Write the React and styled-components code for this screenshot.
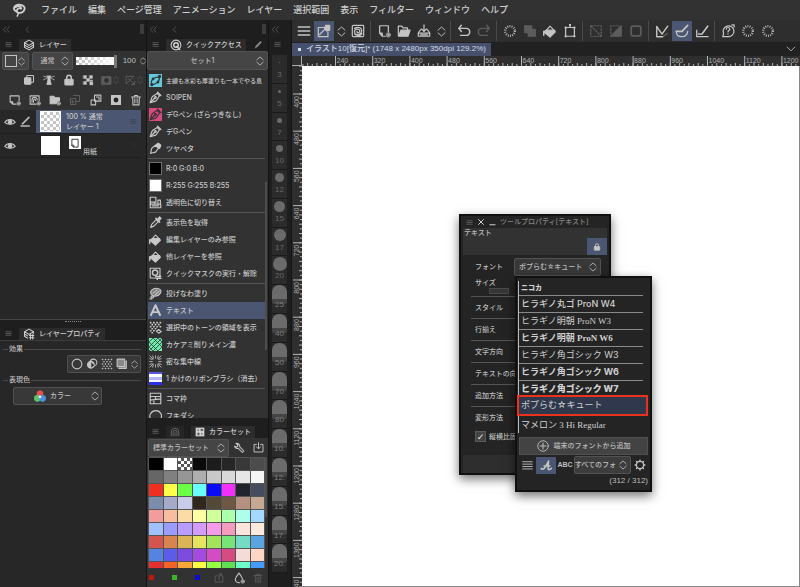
import React from "react"
import styled, { createGlobalStyle, css } from "styled-components"

const colors = {
  dark: "#1e1e1e",
  base: "#272727",
  panel: "#323232",
  control: "#454545",
  line: "#555555",
  text: "#bdbdbd",
  dim: "#5c5c5c",
  blue: "#4b5672",
  red: "#e8321c",
}

const sans = `Inter, "Noto Sans CJK JP", sans-serif`
const narrow = `"Liberation Sans", "Noto Sans CJK JP", sans-serif`
const serif = `"Liberation Serif", "Noto Sans CJK JP", serif`

const checker = css`
  background: repeating-conic-gradient(#c4c4c4 0 25%, #fff 0 50%) 0 0 / 6px 6px;
`

const GlobalStyle = createGlobalStyle`
  * {
    box-sizing: border-box;
  }
  body {
    margin: 0;
    background: ${colors.dark};
  }
  body, button, input, select {
    font-family: ${sans};
    font-size: 7px;
    font-weight: 500;
    line-height: 10px;
    color: ${colors.text};
  }
  button {
    padding: 0;
    border: 0;
    background: none;
  }
  ul {
    margin: 0;
    padding: 0;
    list-style: none;
  }
`

/* ---------- icons ---------- */

const Svg = styled.svg`
  display: block;
  flex: none;
  width: ${p => p.$size || 14}px;
  height: ${p => p.$size || 14}px;
  fill: none;
  stroke: currentColor;
  stroke-width: 1.4;
  stroke-linecap: round;
  stroke-linejoin: round;
`

const plusDot = (
  <>
    <circle cx="13" cy="12.500" r="2.500" fill="#777" stroke="#aaa" strokeWidth=".8" />
    <path d="M11.800 12.500h2.400M13 11.300v2.400" strokeWidth=".7" />
  </>
)

const drawings = {
  menu: <path d="M1.500 3.500h13M1.500 8h13M1.500 12.500h13" strokeWidth="1.800" />,
  grip: <path d="M2 4h12M2 8h12M2 12h12" strokeWidth="1.200" />,
  collapse: <path d="M7 3L2.500 8 7 13M13 3L8.500 8l4.500 5" />,
  back: <path d="M10 3L5.500 8l4.500 5" />,
  updown: <path d="M3 6l5-4.500L13 6M3 10l5 4.500L13 10" />,
  down: <path d="M2 5l6 6 6-6" />,
  layers: (
    <>
      <path d="M8 1.500L14 5 8 8.500 2 5z" />
      <path d="M2 5v6l6 3.500L14 11V5M2 8l6 3.500L14 8" />
    </>
  ),
  layersGrid: (
    <>
      <path d="M8 1.500L14 5 8 8.500 2 5zM2 5v6l4 2.500M2 8l4 2.500M14 5v2" />
      <path d="M8.500 10h6M8.500 13h6M10 8.500v6M13 8.500v6" />
    </>
  ),
  quick: (
    <>
      <circle cx="8" cy="8" r="6.500" />
      <circle cx="8" cy="8" r="3" strokeWidth="2" />
      <path d="M9 10l4 4" strokeWidth="2" />
    </>
  ),
  pencil: <path d="M2.500 14l2-5L12 1.500l2 2L7 11z" fill="currentColor" stroke="none" />,
  clip: (
    <>
      <rect x="5" y="2" width="9" height="9" rx="1" />
      <rect x="2" y="5" width="8.500" height="8.500" rx="1" fill="currentColor" />
    </>
  ),
  lighthouse: (
    <path d="M5.500 5h5M5.500 2.500h5L9.500 5v3l1.500 6H5l1.500-6V5zM1 3l3.500 1M1 7.500L4.500 6M15 3l-3.500 1M15 7.500L11.500 6" fill="currentColor" strokeWidth="1" />
  ),
  lock: (
    <>
      <rect x="2.500" y="7" width="11" height="7.500" rx="1" fill="currentColor" />
      <path d="M5 7V4.500a3 3 0 016 0V7" strokeWidth="2" />
    </>
  ),
  lockChecker: (
    <path d="M2 2h4v4H2zM6 6h4v4H6zM10 2h4v4h-4zM2 10h4v4H2zM10.500 10.500h4v4h-4zM11 10V8h3v2" fill="currentColor" strokeWidth=".5" />
  ),
  mask: (
    <>
      <rect x="1.500" y="2.500" width="13" height="11" fill="currentColor" />
      <circle cx="8" cy="8" r="3.500" fill="#323232" stroke="none" />
    </>
  ),
  rulerOff: <path d="M2 2h11L2 13zM5 5l9 9M9 14h5V9" />,
  newLayer: (
    <>
      <path d="M9.500 13.500H5l-3.500-3V2.500h12v6.500M1.500 10.500H5v3" />
      {plusDot}
    </>
  ),
  newVector: (
    <>
      <path d="M9.500 13.500h-8v-11h12v6.500" />
      <path d="M4 11V8a3.500 3.500 0 017 0M6 11V8.500a1.500 1.500 0 013 0" />
      {plusDot}
    </>
  ),
  folder: (
    <>
      <path d="M1.500 13V3h5l1.500 2h6v3.500L10 13z" fill="currentColor" />
      {plusDot}
    </>
  ),
  transfer: <path d="M6 2h8v8H9M2 6h7v8H2zM5 8v4M3.500 10.500L5 12l1.500-1.500" />,
  merge: (
    <>
      <rect x="6" y="1.500" width="8.500" height="8" />
      <path d="M1.500 8h6v6.500h-6zM8.500 4h3.500v3.500" />
    </>
  ),
  layerMask: (
    <>
      <rect x="2" y="2" width="12" height="12" fill="currentColor" />
      <circle cx="8" cy="8" r="3.200" fill="#222" stroke="none" />
    </>
  ),
  trash: <path d="M2 4h12M6 4V2h4v2M3.500 4l.5 10.500h8L12.500 4M6.500 6.500v5.500M9.500 6.500v5.500" />,
  eye: (
    <>
      <path d="M1 8.500C4 3.500 12 3.500 15 8.500 12 12 4 12 1 8.500z" />
      <circle cx="8" cy="8" r="2.500" fill="currentColor" />
    </>
  ),
  draw: <path d="M1.500 14.500h12M3.500 11.500L13 2" strokeWidth="2.200" />,
  nib: (
    <>
      <path d="M1.500 14.500L3.500 8C5 5.500 8 5 10 3l3 3c-2 2-2.500 5-5 6.500z" />
      <path d="M2 14l5-5M10.500 1.500l4 4" strokeWidth="1.700" />
      <circle cx="8" cy="8" r="1" />
    </>
  ),
  brush: (
    <>
      <path d="M2 14c1-2 0-5 2-7l4-3 3.500 3.500L8.500 12C7 13.500 4 13 2 14z" />
      <path d="M8.500 3.500l3-2 3 2.500-1.500 4z" fill="currentColor" />
    </>
  ),
  curve: (
    <>
      <path d="M3.500 13C1 8 6 3.500 12.500 3.500 14 8 9 13 3.500 13z" />
      <circle cx="13" cy="3" r="1.300" fill="currentColor" />
      <circle cx="3.500" cy="13" r="1.300" fill="currentColor" />
      <circle cx="5" cy="6" r="1" fill="currentColor" />
      <circle cx="11" cy="10" r="1" fill="currentColor" />
    </>
  ),
  stamp: (
    <>
      <path d="M1.500 1.500h7v6h-7zM1.500 10h13v4.500h-13zM7 10V7.500M11 10V5h3v5" />
      <path d="M1.500 7.500v2.500M4 12.200h8" />
    </>
  ),
  dropper: (
    <>
      <path d="M2 14l1.500-4L9 4.500 11.500 7 6 12.500z" />
      <path d="M8.500 3l4.500 4.500M10 5l3-3.500 1.500 1.500L11.500 6z" strokeWidth="2" />
    </>
  ),
  bucket: (
    <>
      <path d="M3.500 7.500L8 2.500l5 5" />
      <path d="M1 9l3-2h9l1 2-6 6z M1 8c-1 2-1 4 0 5z" fill="currentColor" />
    </>
  ),
  quickMask: (
    <>
      <rect x="1.500" y="1.500" width="12" height="12" />
      <circle cx="7.500" cy="7" r="3.200" strokeWidth="1.800" />
      <path d="M8 11.500h6.500L13 10M15 14H9l1.500 1.500" />
    </>
  ),
  lasso: (
    <>
      <path d="M3 9C0 5 5 1.500 9 1.500s7 3 5 6-6 4-9 3.500z" fill="#777" />
      <path d="M5 7.500l5-4M7.500 9.500l5-4.500M5 11c-2-.5-3.500 1-2 2.500S2 15 1 14.500M5 11c2 1 0 3-2 2.500" />
    </>
  ),
  text: <path d="M2 14.500L8 1.500l6 13M4.500 10h7" strokeWidth="2.400" strokeLinecap="butt" />,
  tone: (
    <>
      <path
        d="M2 2h0M6 2h0M10 2h0M14 2h0M4 4.500h0M8 4.500h0M12 4.500h0M2 7h0M6 7h0M10 7h0M14 7h0M4 9.500h0M8 9.500h0M2 12h0M6 12h0M4 14.500h0"
        strokeWidth="2"
        strokeLinecap="square"
      />
      <path d="M9 12.500l3-2 3 2.500-3 2z" />
    </>
  ),
  dots: (
    <path
      d="M2 2h0M6 2h0M10 2h0M14 2h0M4 5h0M8 5h0M12 5h0M2 8h0M6 8h0M10 8h0M14 8h0M4 11h0M8 11h0M12 11h0M2 14h0M6 14h0M10 14h0M14 14h0"
      strokeWidth="2.200"
    />
  ),
  net: <path d="M0 5l5-5M0 11L11 0M0 16L16 0M5 16L16 5M11 16l5-5M0 11l5 5M0 5l11 11M5 0l11 11M11 0l5 5" strokeWidth="1" />,
  burst: (
    <path d="M1 1l4 4M15 1l-4 4M1 15l4-4M15 15l-4-4M8 1v3M8 12v3M1 8h3M12 8h3M4.500 1l1 3M11.500 1l-1 3M4.500 15l1-3M11.500 15l-1-3M1 4.500l3 1M15 4.500l-3 1M1 11.500l3-1M15 11.500l-3-1" strokeWidth="1" strokeDasharray="2 .6" />
  ),
  frame: <path d="M1.500 1.500h13v13h-13zM1.500 5.500h13M1.500 10l13-1.500M8 5.500v4M6 9.500v5" />,
  balloon: <path d="M3.500 14c-6-6 0-12 5-12s10 6 4.500 12z" />,
  palette: <path d="M2 14V8a6 6 0 0112 0v6M5 14V8.500a3 3 0 016 0V14M8 9v5" />,
  colorset: (
    <>
      <rect x="1" y="1" width="14" height="14" fill="currentColor" stroke="none" />
      <path d="M4 4h2v2H4zM9 3h4v3H9zM4 9h3v4H4zM10 10h2v2h-2z" fill="#555" stroke="none" />
    </>
  ),
  wrench: <path d="M2 5.500a4 4 0 005 3l5.500 5.500 2-2L9 6.500a4 4 0 00-5-4.500L6.500 4 6 6 4 6.500z" />,
  importBox: <path d="M5 3.500H1.500v11h13v-11H11M8 1v8.500M5 7l3 3 3-3" />,
  exportBox: <path d="M5 4.500H2v10h12v-10h-3M8 11V2h4M10 0l2 2-2 2" />,
  drop: (
    <>
      <path d="M8 1.500c3 4 4.500 6 4.500 8M9 14.300C5.500 14.500 3 12.500 3 10c0-2.500 2-4.500 5-8.500" />
      {plusDot}
    </>
  ),
  circle: <circle cx="8" cy="8" r="6.500" />,
  borderFx: (
    <>
      <circle cx="10" cy="6" r="4.500" />
      <circle cx="6.500" cy="9" r="4.500" fill="currentColor" />
      <path d="M7 5.500l4 4-4 3z" fill="#333" stroke="none" />
    </>
  ),
  layerColor: (
    <>
      <rect x="1.500" y="1.500" width="10" height="10" fill="#888" />
      <path d="M13.500 4v9.500H4" strokeWidth="2" />
    </>
  ),
  pen: (
    <>
      <path d="M8.500 4h-7v10.500h11V9M3 12l7-7" />
      <path d="M10 1.500h4.500V7L11 8 8.500 5z" fill="currentColor" />
    </>
  ),
  spiral: (
    <>
      <rect x="1.500" y="1.500" width="13" height="13" rx="1" />
      <path d="M4 5c5-3 9 0 8 4s-8 4-8 0 6-4 6-1-4 2-3 .5M12.500 11c-2 3-6 2-8 1" />
    </>
  ),
  newFile: (
    <>
      <path d="M9.500 14H6l-3-3.500V2h10v7M3 10.500h3V14" />
      {plusDot}
    </>
  ),
  open: (
    <>
      <path d="M1.500 13.500V2.500h4l1.500 2h5V7" />
      <path d="M2 14L4.500 7H15l-2.500 7z" fill="currentColor" />
    </>
  ),
  save: <path d="M4.500 6L1.500 10v4h13v-4l-3-4M1.500 10.500h13M8 1v7.500M5.500 6L8 8.500 10.500 6M4 12.500h8" />,
  undo: <path d="M5 1.500L2 5l3 3.500M2 5h8.500a3.500 3.500 0 010 8H4" strokeWidth="1.700" />,
  redo: <path d="M11 1.500L14 5l-3 3.500M14 5H5.500a3.500 3.500 0 000 8H12" strokeWidth="1.700" />,
  spinner: (
    <circle cx="8" cy="8" r="5.500" strokeWidth="2.600" strokeLinecap="butt" strokeDasharray="1 1.468" />
  ),
  copy: <path d="M2 2h8v8H2zM6 6h8v8H6z" fill="currentColor" />,
  transform: (
    <>
      <path d="M3 4h10v10H3zM8 1v3" />
      <path d="M2.500 3.500h1v1h-1zM12.500 3.500h1v1h-1zM2.500 13.500h1v1h-1zM12.500 13.500h1v1h-1zM7.500 .5h1v1h-1z" />
    </>
  ),
  deselect: <path d="M2 2h12v12H2zM2 2l12 12" strokeDasharray="2 1.800" />,
  invert: (
    <>
      <path d="M14 2v12H2z" fill="currentColor" />
      <path d="M2 11V2h9" strokeDasharray="2 2" />
    </>
  ),
  border: <rect x="2.500" y="2.500" width="11" height="11" rx="2" strokeWidth="2" />,
  snapRuler: (
    <>
      <path d="M2 3v11.500h6.500" strokeWidth="1.600" />
      <path d="M2 3l6 8.500M8 11.500l6.500-9" strokeWidth="1.700" />
      <path d="M9 14.500L14 11" strokeWidth=".8" strokeDasharray="1 1.500" />
    </>
  ),
  snapSpecial: (
    <>
      <path d="M1.500 8.500c0 4 3 6 6.500 6s6-2 6.500-6" />
      <path d="M1.500 8.500H8l6.500-7" strokeWidth="2" />
    </>
  ),
  snapGrid: (
    <>
      <path d="M2 7v7.500h13" strokeWidth="1.500" />
      <path d="M4 11.500h4l6.500-9" strokeWidth="1.800" />
    </>
  ),
  help: (
    <>
      <path d="M2 14.500l1-3.500A6.200 6.200 0 118 14.500z" />
      <path d="M6 6a2 2 0 114 0c0 1.500-2 1.500-2 3M8 11.300v.2M12.500 1l2.500 0v2.500" />
    </>
  ),
  close: <path d="M3 3l10 10M13 3L3 13" strokeWidth="2" />,
  minimize: <path d="M2 13h12" strokeWidth="2.400" />,
  plusCircle: (
    <>
      <circle cx="8" cy="8" r="7" strokeWidth="1.200" />
      <path d="M8 4v8M4 8h8" />
    </>
  ),
  rows: <path d="M1 2.500h14M1 6h14M1 9.500h14M1 13h14" strokeWidth="1.300" />,
  script: <path d="M1.500 11.500c1 2 3.500 1 5-1.500L10.500 2.500 10 12c0 1.500 2 1.500 4-.5M5 8.500h7" strokeWidth="1.900" />,
  gear: (
    <>
      <circle cx="8" cy="8" r="4.800" strokeWidth="1.700" />
      <path d="M8 1.500v.8M8 13.700v.8M1.500 8h.8M13.700 8h.8M3.400 3.400l.6.600M12 12l.6.600M3.400 12.600l.6-.6M12 4l.6-.6" strokeWidth="2" />
    </>
  ),
}

const Icon = ({ name, size }) => (
  <Svg viewBox="0 0 16 16" $size={size} aria-hidden="true">
    {drawings[name]}
  </Svg>
)

/* ---------- shared parts ---------- */

const Screen = styled.div`
  display: flex;
  flex-direction: column;
  height: 100vh;
  min-height: 480px;
`

const Workspace = styled.div`
  flex: 1;
  min-height: 0;
  display: grid;
  grid-template-columns: 147px 122px 23px minmax(0, 1fr);
`

const Column = styled.aside`
  display: flex;
  flex-direction: column;
  min-height: 0;
  min-width: 0;
  border-right: 1px solid #141414;
`

const DockStrip = styled.div`
  flex: none;
  display: flex;
  align-items: center;
  gap: 12px;
  height: 18px;
  padding: 0 2px;
  color: ${colors.dim};
  &::after {
    content: "";
    width: 4px;
    height: 10px;
    margin-left: auto;
    background: #3c3c3c;
  }
`

const TabBar = styled.div`
  flex: none;
  display: flex;
  align-items: center;
  gap: 7px;
  height: 13px;
  padding-left: 5px;
  color: #8a8a8a;
`

const Tab = styled.button`
  display: flex;
  align-items: center;
  gap: 4px;
  height: 12px;
  padding: 0 4px;
  color: ${p => (p.$active ? "#d0d0d0" : "#6c6c6c")};
  background: ${p => (p.$active ? "#2c2c2c" : "#262626")};
`

const IconButton = styled.button`
  display: flex;
  align-items: center;
  justify-content: center;
  width: ${p => p.$width || 20}px;
  height: ${p => p.$height || 20}px;
  color: ${p => (p.$dim ? colors.dim : "#c4c4c4")};
  background: ${p => (p.$active ? colors.blue : "transparent")};
`

const SelectWrap = styled.label`
  flex: none;
  display: grid;
  align-items: center;
  width: ${p => (p.$width ? p.$width + "px" : "auto")};
  height: ${p => p.$height || 18}px;
  background: ${p => p.$bg || colors.control};
  border: 1px solid #525252;
  border-radius: 2px;
  select,
  svg {
    grid-area: 1 / 1;
  }
  svg {
    justify-self: end;
    margin-right: 2px;
    pointer-events: none;
  }
  select {
    appearance: none;
    width: 100%;
    height: 100%;
    padding: ${p => p.$padding || "0 14px 0 4px"};
    border: 0;
    background: none;
    text-align: ${p => p.$align || "left"};
  }
`

const Select = ({ label, value, ...rest }) => (
  <SelectWrap {...rest}>
    <select aria-label={label} defaultValue={value}>
      <option>{value}</option>
    </select>
    <Icon name="updown" size={10} />
  </SelectWrap>
)

/* ---------- menu bar ---------- */

const MenuBar = styled.nav`
  flex: none;
  display: flex;
  align-items: center;
  gap: 11px;
  height: 20px;
  padding-left: 12px;
  background: #323232;
  color: #cfcfcf;
  svg {
    margin-right: 4px;
  }
  button {
    font-size: 9px;
    line-height: 14px;
    white-space: nowrap;
    color: inherit;
  }
`

const menus = [
  "ファイル",
  "編集",
  "ページ管理",
  "アニメーション",
  "レイヤー",
  "選択範囲",
  "表示",
  "フィルター",
  "ウィンドウ",
  "ヘルプ",
]

const Menu = () => (
  <MenuBar>
    <Svg viewBox="0 0 16 16" aria-label="CLIP STUDIO">
      <path d="M4.500 9.500C.5 7 2 2.500 8 2c6-.3 8 4 5 7.500-3 3-7.500 2-7.500-.5s3-4 5-2.500" strokeWidth="2.100" />
      <path d="M4 5c2-1.500 5-1.500 6.500 0M7.500 11.500L6 15" strokeWidth="1.700" />
    </Svg>
    {menus.map(menu => (
      <button key={menu}>{menu}</button>
    ))}
  </MenuBar>
)

/* ---------- layer column ---------- */

const LayerPanel = styled.section`
  flex: 282 0 0;
  min-height: 0;
  display: flex;
  flex-direction: column;
  border-bottom: 1px solid #444;
`

const LayerTools = styled.div`
  flex: none;
  background: ${colors.panel};
  padding-bottom: 1px;
`

const BlendRow = styled.div`
  display: flex;
  align-items: center;
  gap: 3px;
  height: 20px;
  padding-left: 2px;
`

const PaletteButton = styled.button`
  flex: none;
  display: flex;
  align-items: center;
  justify-content: space-between;
  width: 27px;
  height: 18px;
  padding: 0 2px;
  border: 1px solid #525252;
  border-radius: 2px;
  background: ${colors.control};
  &::before {
    content: "";
    width: 12px;
    height: 10px;
    border: 1px solid #c4c4c4;
  }
`

const Opacity = styled.input`
  appearance: none;
  width: 41px;
  height: 8px;
  margin: 0;
  background: linear-gradient(90deg, transparent, #fff),
    repeating-conic-gradient(#bbb 0 25%, #fff 0 50%) 0 0 / 6px 6px;
  &::-webkit-slider-thumb {
    appearance: none;
    width: 3px;
    height: 13px;
    background: #777;
  }
`

const OpacityValue = styled.input`
  width: 16px;
  padding: 0;
  border: 0;
  background: none;
  font-family: ${narrow};
  font-size: 8px;
  text-align: right;
`

const LockRow = styled.div`
  display: flex;
  padding-left: 19px;
  height: 18px;
  align-items: center;
`

const CommandRow = styled.div`
  display: grid;
  grid-template-columns: repeat(7, 1fr);
  justify-items: center;
  padding: 1px 0 0 5px;
`

const LayerList = styled.ul`
  flex: 1;
  padding-right: 5px;
  background: ${colors.base};
`

const LayerRow = styled.li`
  display: grid;
  grid-template-columns: 20px 16px 1fr;
  align-items: center;
  height: 24px;
  border-bottom: 1px solid ${colors.dark};
`

const LayerBody = styled.div`
  display: flex;
  align-items: center;
  gap: 5px;
  height: 23px;
  padding: 0 4px 0 4px;
  background: ${p => (p.$selected ? colors.blue : "transparent")};
  color: ${p => (p.$selected ? "#c8c8c8" : colors.text)};
  > svg:last-child {
    margin-left: auto;
    color: #333;
  }
`

const Thumb = styled.span`
  width: 21px;
  height: 21px;
  border: 1px solid ${p => (p.$selected ? "#fff" : "#222")};
  background: #fff;
  ${p => p.$selected && checker}
`

const PaperIcon = styled.span`
  display: grid;
  place-items: center;
  align-self: flex-start;
  width: 12px;
  height: 13px;
  margin: 2px 0 0 3px;
  color: #222;
  background: #fff;
`

const PaperName = styled.span`
  align-self: flex-end;
  margin-left: -3px;
`

const Dots = styled.div`
  width: 16px;
  height: 2px;
  margin: 1px auto 4px;
  border-top: 1px dotted #888;
`

const PropertyPanel = styled.section`
  flex: 267 0 0;
  min-height: 0;
  display: flex;
  flex-direction: column;
`

const PropertyBody = styled.div`
  flex: 1;
  padding: 2px 5px 0 3px;
  border-top: 1px solid #3c3c3c;
  background: ${colors.base};
`

const GroupTitle = styled.h2`
  display: flex;
  align-items: center;
  gap: 1px;
  margin: 0;
  height: 12px;
  font-size: 7px;
  font-weight: 500;
  &::before,
  &::after {
    content: "";
    width: 5px;
    height: 1px;
    background: #4a4a4a;
  }
  &::after {
    flex: 1;
  }
`

const EffectGroup = styled.div`
  display: flex;
  align-items: center;
  justify-content: space-between;
  width: 74px;
  height: 18px;
  margin: 0 0 1px auto;
  padding: 0 1px;
  border: 1px solid #505050;
  border-radius: 2px;
  background: #383838;
`

const ColorMode = styled.button`
  display: flex;
  align-items: center;
  gap: 4px;
  width: 89px;
  height: 18px;
  margin: 1px 0 0 10px;
  padding: 0 1px 0 20px;
  border: 1px solid #505050;
  border-radius: 2px;
  background: #383838;
  > svg:last-child {
    margin-left: auto;
  }
`

const LayerColumn = () => (
  <Column>
    <DockStrip>
      <Icon name="collapse" size={9} />
      <Icon name="back" size={9} />
    </DockStrip>
    <LayerPanel>
      <TabBar>
        <Icon name="grip" size={7} />
        <Tab $active>
          <Icon name="layers" size={12} />
          レイヤー
        </Tab>
      </TabBar>
      <LayerTools>
        <BlendRow>
          <PaletteButton aria-label="パレットカラー">
            <Icon name="updown" size={9} />
          </PaletteButton>
          <Select label="合成モード" value="通常" $width={41} $align="center" $padding="0 12px 0 2px" />
          <Opacity type="range" aria-label="不透明度" defaultValue="100" />
          <OpacityValue aria-label="不透明度の値" defaultValue="100" />
          <Icon name="updown" size={8} />
        </BlendRow>
        <LockRow>
          {["clip", "lighthouse", "lock", "lockChecker"].map(name => (
            <IconButton key={name} $height={18} aria-label={name}>
              <Icon name={name} size={12} />
            </IconButton>
          ))}
          {["mask", "rulerOff"].map(name => (
            <IconButton key={name} $dim $width={24} $height={18} aria-label={name}>
              <Icon name={name} size={11} />
              <Icon name="updown" size={8} />
            </IconButton>
          ))}
        </LockRow>
        <CommandRow>
          {["newLayer", "newVector", "folder", "transfer", "merge", "layerMask", "trash"].map(name => (
            <IconButton key={name} $height={19} $dim={name === "transfer"} aria-label={name}>
              <Icon name={name} size={12} />
            </IconButton>
          ))}
        </CommandRow>
      </LayerTools>
      <LayerList>
        <LayerRow>
          <IconButton $height={22} aria-label="表示">
            <Icon name="eye" size={12} />
          </IconButton>
          <Icon name="draw" size={11} />
          <LayerBody $selected>
            <Thumb $selected />
            <span>
              100 % 通常
              <br />
              レイヤー 1
            </span>
            <Icon name="grip" size={7} />
          </LayerBody>
        </LayerRow>
        <LayerRow>
          <IconButton $height={22} aria-label="表示">
            <Icon name="eye" size={12} />
          </IconButton>
          <span />
          <LayerBody>
            <Thumb />
            <PaperIcon>
              <Svg viewBox="0 0 16 16" $size={10}>
                <path d="M6 14.500H13V2H3v9.500zM3 11.500h3v3" />
              </Svg>
            </PaperIcon>
            <PaperName>用紙</PaperName>
            <Icon name="grip" size={7} />
          </LayerBody>
        </LayerRow>
      </LayerList>
    </LayerPanel>
    <PropertyPanel>
      <Dots />
      <TabBar>
        <Icon name="grip" size={7} />
        <Tab $active>
          <Icon name="layersGrid" size={12} />
          レイヤープロパティ
        </Tab>
      </TabBar>
      <PropertyBody>
        <GroupTitle>効果</GroupTitle>
        <EffectGroup>
          {["circle", "borderFx", "dots", "layerColor"].map(name => (
            <IconButton key={name} $width={15} $height={16} aria-label={name}>
              <Icon name={name} size={12} />
            </IconButton>
          ))}
          <Icon name="updown" size={9} />
        </EffectGroup>
        <GroupTitle>表現色</GroupTitle>
        <ColorMode>
          <Svg viewBox="0 0 16 16" $size={12}>
            <circle cx="8" cy="5" r="4.500" fill="#e0524a" stroke="none" />
            <circle cx="4.500" cy="11" r="4.500" fill="#5cc46a" stroke="none" />
            <circle cx="11.500" cy="11" r="4.500" fill="#4f8fe0" stroke="none" />
            <circle cx="8" cy="9" r="1.800" fill="#fff" stroke="none" />
          </Svg>
          カラー
          <Icon name="updown" size={10} />
        </ColorMode>
      </PropertyBody>
    </PropertyPanel>
  </Column>
)

/* ---------- quick access column ---------- */

const QuickPanel = styled.section`
  flex: 380 0 0;
  min-height: 0;
  display: flex;
  flex-direction: column;
`

const QuickScroll = styled.div`
  flex: 1;
  min-height: 0;
  overflow: hidden;
  display: grid;
  grid-template-columns: minmax(0, 1fr) 3px;
  padding: 2px 0 0 1px;
  background: ${colors.panel};
`

const ScrollThumb = styled.span`
  width: 2px;
  height: ${p => p.$height}px;
  margin-top: ${p => p.$top || 0}px;
  background: #4c4c4c;
`

const QuickItem = styled.button`
  display: flex;
  align-items: center;
  gap: 4px;
  width: 100%;
  height: 17px;
  padding-left: 1px;
  white-space: nowrap;
  font-size: ${p => (p.$small ? 6 : 7)}px;
  color: #c8c8c8;
  background: ${p => (p.$active ? colors.blue : "transparent")};
`

const QuickRule = styled.div`
  height: 1px;
  margin: 1px 0;
  background: ${colors.line};
`

const Chip = styled.span`
  flex: none;
  display: grid;
  place-items: center;
  width: 13px;
  height: 13px;
  color: ${p => (p.$bg ? "#333" : "#c8c8c8")};
  background: ${p => p.$bg || "transparent"};
  border: ${p => (p.$border ? "1px solid #707070" : "0")};
`

const quickGroups = [
  [
    { icon: "curve", bg: "#63cbdc", label: "主線も水彩も厚塗りも一本でやる息", small: true },
    { icon: "nib", label: "SOIPEN" },
    { icon: "nib", bg: "#d9487f", label: "デGペン (ざらつきなし)" },
    { icon: "nib", label: "デGペン" },
    { icon: "brush", label: "ツヤベタ" },
  ],
  [
    { bg: "#000", border: true, label: "R:0 G:0 B:0" },
    { bg: "#fff", border: true, label: "R:255 G:255 B:255" },
    { icon: "stamp", label: "透明色に切り替え" },
  ],
  [
    { icon: "dropper", label: "表示色を取得" },
    { icon: "bucket", label: "編集レイヤーのみ参照" },
    { icon: "bucket", label: "他レイヤーを参照" },
    { icon: "quickMask", label: "クイックマスクの実行・解除" },
  ],
  [
    { icon: "lasso", label: "投げなわ塗り" },
    { icon: "text", label: "テキスト", active: true },
    { icon: "tone", label: "選択中のトーンの領域を表示" },
    { icon: "net", bg: "#6df0ae", label: "カケアミ削りメイン濃" },
    { icon: "burst", label: "密な集中線" },
    {
      bg: "linear-gradient(#5a5ad8 0 2px, #fff 2px 5px, #b4b8f4 5px 8px, #f4f4ff 8px 10px, #2c30e0 10px)",
      label: "1 かけのリボンブラシ（消去）",
    },
  ],
  [
    { icon: "frame", label: "コマ枠" },
    { icon: "balloon", label: "フキダシ" },
  ],
]

const ColorPanel = styled.section`
  flex: 162 0 0;
  min-height: 0;
  display: flex;
  flex-direction: column;
  padding-top: 7px;
`

const ColorHeader = styled.div`
  flex: none;
  display: flex;
  align-items: center;
  height: 19px;
  padding-left: 1px;
  background: ${colors.panel};
`

const SwatchArea = styled.div`
  flex: 1;
  min-height: 0;
  overflow: hidden;
  display: grid;
  grid-template-columns: minmax(0, 1fr) 3px;
  padding-left: 1px;
  background: ${colors.panel};
`

const SwatchGrid = styled.div`
  display: grid;
  grid-template-columns: repeat(8, 1fr);
  grid-auto-rows: 12px;
  align-content: start;
  gap: 1px;
  padding: 1px;
  background: #555;
`

const Swatch = styled.button`
  background: ${p => p.$color};
  ${p =>
    p.$color === "checker" &&
    css`
      background: repeating-conic-gradient(#555 0 25%, #fff 0 50%) 0 0 / 6px 6px;
    `}
`

const ColorFooter = styled.div`
  flex: none;
  display: flex;
  align-items: center;
  height: 19px;
  padding-left: 2px;
  background: ${colors.panel};
`

const ColorDots = styled.div`
  display: flex;
  gap: 18px;
  margin-right: 9px;
`

const ColorDot = styled.span`
  width: 5px;
  height: 5px;
  background: ${p => p.$color};
`

const swatches = `
  #000000 #ffffff checker #0a0a0a #1c1c1c #262626 #383838 #4c4c4c
  #666666 #808080 #969696 #aeaeae #c8c8c8 #d8d8d8 #e6e6e6 #f5f5f5
  #f0301f #ffff4a #6cff45 #6affff #0a0af5 #f030f8 #20242c #454c5c
  #7c8cac #a4aac8 #c8cce6 #30281e #544838 #6c5844 #b49080 #c4a894
  #f49c9c #f8bca0 #fadca4 #ffffa4 #d0ff9c #acffac #acffe8 #a4d8ff
  #a0c0ff #9c9cff #b89cff #d49cfa #f49ce8 #f49cbc #fce4dc #ffe8dc
  #d45450 #d88450 #dcb458 #e4e460 #a4e45c #78e478 #74dcc4 #5ca4e0
  #5484e0 #5c5ce8 #7c4ce0 #a44ce0 #d44cc4 #d44c80 #f4dcd8 #fcd8c4
  #e43030 #f46428 #f8a838 #ffff44 #94ff44 #60e050 #6cffc8 #449cff
`
  .trim()
  .split(/\s+/)

const QuickColumn = () => (
  <Column>
    <DockStrip>
      <Icon name="collapse" size={9} />
      <Icon name="back" size={9} />
    </DockStrip>
    <QuickPanel>
      <TabBar>
        <Icon name="grip" size={7} />
        <Tab $active>
          <Icon name="quick" size={12} />
          クイックアクセス
        </Tab>
        <Icon name="pencil" size={10} />
      </TabBar>
      <Select label="セット" value="セット1" $height={19} $align="center" />
      <QuickScroll>
        <div>
          {quickGroups.map((group, i) => (
            <React.Fragment key={i}>
              {i > 0 && <QuickRule />}
              {group.map(item => (
                <QuickItem key={item.label} $active={item.active} $small={item.small}>
                  <Chip $bg={item.bg} $border={item.border}>
                    {item.icon && <Icon name={item.icon} size={13} />}
                  </Chip>
                  {item.label}
                </QuickItem>
              ))}
            </React.Fragment>
          ))}
        </div>
        <ScrollThumb $top={110} $height={168} />
      </QuickScroll>
    </QuickPanel>
    <ColorPanel>
      <TabBar>
        <Icon name="grip" size={7} />
        <Tab aria-label="カラーサークル">
          <Icon name="palette" size={10} />
        </Tab>
        <Tab $active>
          <Icon name="colorset" size={10} />
          カラーセット
        </Tab>
      </TabBar>
      <ColorHeader>
        <Select label="カラーセット" value="標準カラーセット" $width={81} />
        <IconButton $height={18} aria-label="設定">
          <Icon name="wrench" size={12} />
        </IconButton>
        <IconButton $height={18} aria-label="読み込み">
          <Icon name="importBox" size={11} />
        </IconButton>
      </ColorHeader>
      <SwatchArea>
        <SwatchGrid>
          {swatches.map((color, i) => (
            <Swatch key={i} $color={color} aria-label={color} />
          ))}
        </SwatchGrid>
        <ScrollThumb $height={60} />
      </SwatchArea>
      <ColorFooter>
        <ColorDots>
          <ColorDot $color="#c0180c" />
          <ColorDot $color="#3cb428" />
          <ColorDot $color="#0c0cd0" />
        </ColorDots>
        <IconButton $dim $height={18} aria-label="置き換え">
          <Icon name="exportBox" size={10} />
        </IconButton>
        <IconButton $height={18} aria-label="追加">
          <Icon name="drop" size={12} />
        </IconButton>
        <IconButton $dim $height={18} aria-label="削除">
          <Icon name="trash" size={10} />
        </IconButton>
      </ColorFooter>
    </ColorPanel>
  </Column>
)

/* ---------- brush sizes ---------- */

const SizeList = styled.div`
  flex: 1;
  min-height: 0;
  display: flex;
  flex-direction: column;
  margin: 4px 4px 14px 3px;
`

const SizeButton = styled.button`
  flex: 1;
  min-height: 0;
  display: grid;
  grid-template-rows: 15px 10px;
  justify-items: center;
  align-content: start;
  border-bottom: 1px solid #1a1a1a;
  background: #2b2b2b;
  font-family: ${narrow};
  font-size: 8px;
`

const SizeDot = styled.span`
  align-self: ${p => (p.$big ? "start" : "center")};
  width: ${p => p.$size}px;
  height: ${p => (p.$big ? 19 : p.$size)}px;
  border-radius: ${p => (p.$big ? "7px 7px 2px 2px" : "50%")};
  background: ${p => (p.$big ? "linear-gradient(#6b6b6b 14px, #444 14px)" : "#6b6b6b")};
`

const SizeLabel = styled.span`
  z-index: 1;
  color: ${p => (p.$big ? "#7c7c7c" : "#686868")};
`

const brushSizes = [
  ["3", 1],
  ["5", 3],
  ["7", 5],
  ["10", 7],
  ["12", 9],
  ["15", 11],
  ["17", 12],
  ["20", 14],
  ["25", 15],
  ["40", 15],
  ["50", 15],
  ["70", 15],
  ["80", 15],
  ["10.", 15],
  ["12.", 15],
  ["15.", 15],
  ["17.", 15],
  ["20.", 15],
]

const SizeColumn = () => (
  <Column>
    <DockStrip>
      <Icon name="collapse" size={9} />
    </DockStrip>
    <TabBar>
      <Icon name="grip" size={7} />
    </TabBar>
    <SizeList>
      {brushSizes.map(([label, size]) => (
        <SizeButton key={label}>
          <SizeDot $size={size} $big={size === 15} />
          <SizeLabel $big={size === 15}>{label}</SizeLabel>
        </SizeButton>
      ))}
    </SizeList>
  </Column>
)

/* ---------- canvas ---------- */

const Main = styled.main`
  display: flex;
  flex-direction: column;
  min-width: 0;
  min-height: 0;
`

const CommandBar = styled.div`
  flex: none;
  display: flex;
  align-items: center;
  height: 22px;
  padding-left: 2px;
  overflow: hidden;
  background: #2e2e2e;
`

const Divider = styled.span`
  flex: none;
  width: 1px;
  height: 20px;
  margin: 0 3px 0 2px;
  background: #4a4a4a;
`

const DocumentBar = styled.div`
  flex: none;
  display: flex;
  align-items: center;
  justify-content: space-between;
  height: 14px;
  padding: 0 4px 0 0;
  background: #212121;
`

const DocumentTab = styled.button`
  display: flex;
  align-items: center;
  gap: 5px;
  height: 13px;
  padding: 0 5px 0 6px;
  font-family: ${narrow};
  font-size: 8px;
  white-space: nowrap;
  color: #d4d8e2;
  background: #46506c;
  &::before {
    content: "";
    width: 3px;
    height: 3px;
    background: #ddd;
  }
`

const Stage = styled.div`
  flex: 1;
  min-height: 0;
  display: grid;
  grid-template-columns: 10px minmax(0, 1fr);
  grid-template-rows: 10px minmax(0, 1fr);
  background: #303030;
`

const Corner = styled.span`
  border-right: 1px solid #aaa;
  border-bottom: 1px solid #aaa;
`

const RulerBox = styled.div`
  overflow: hidden;
  background: #2e2e2e;
`

const RulerSvg = styled.svg`
  display: block;
  stroke: #b4b4b4;
  stroke-width: 1;
  text {
    font-family: ${narrow};
    font-size: 7px;
    font-weight: 400;
    fill: #b0b0b0;
    stroke: none;
  }
`

const Paper = styled.div`
  border-right: 1px solid #888;
  border-bottom: 1px solid #888;
  background: #fff;
`

const tools = [
  "menu",
  "*pen",
  "updown",
  "spiral",
  "|",
  "newFile",
  "open",
  "save",
  "updown",
  "|",
  "undo",
  "-redo",
  "|",
  "spinner",
  "-copy",
  "bucket",
  "transform",
  "|",
  "-deselect",
  "-invert",
  "-border",
  "|",
  "snapRuler",
  "*snapSpecial",
  "snapGrid",
  "|",
  "help",
  "spinner",
  "spinner",
]

const STEP = 37.2

const Ruler = ({ vertical, start, first, count }) => {
  const marks = Array.from({ length: count }, (_, i) => i)
  const minor = Array.from({ length: 320 }, (_, i) => i)
  const at = i => start + i * STEP

  if (vertical) {
    return (
      <RulerSvg width="10" height="1500">
        {minor.map(i => (
          <path key={i} d={`M${i % 2 ? 8 : 7} ${at(i / 8 - 1)}h4`} />
        ))}
        {marks.map(i => (
          <g key={i}>
            <path d={`M1 ${at(i)}h9`} />
            <text transform={`translate(7 ${at(i) + 2}) rotate(-90)`} textAnchor="end">
              {first + i * 80}
            </text>
          </g>
        ))}
      </RulerSvg>
    )
  }
  return (
    <RulerSvg width="1500" height="10">
      {minor.map(i => (
        <path key={i} d={`M${at(i / 8 - 1)} ${i % 2 ? 8 : 7}v4`} />
      ))}
      {marks.map(i => (
        <g key={i}>
          <path d={`M${at(i)} 0v10`} />
          <text x={at(i) + 1} y="7">
            {first + i * 80}
          </text>
        </g>
      ))}
    </RulerSvg>
  )
}

const CanvasArea = () => (
  <Main>
    <CommandBar>
      {tools.map((tool, i) => {
        if (tool === "|") return <Divider key={i} />
        const name = tool.replace(/^[*-]/, "")
        return (
          <IconButton
            key={i}
            aria-label={name}
            $width={name === "updown" ? 14 : 20}
            $active={tool[0] === "*"}
            $dim={tool[0] === "-"}
          >
            <Icon name={name} size={name === "updown" ? 11 : 14} />
          </IconButton>
        )
      })}
    </CommandBar>
    <DocumentBar>
      <DocumentTab>イラスト10[復元]* (1748 x 2480px 350dpi 129.2%)</DocumentTab>
      <Icon name="down" size={10} />
    </DocumentBar>
    <Stage>
      <Corner />
      <RulerBox>
        <Ruler start={33.5} first={240} count={13} />
      </RulerBox>
      <RulerBox>
        <Ruler vertical start={28} first={400} count={14} />
      </RulerBox>
      <Paper />
    </Stage>
  </Main>
)

/* ---------- floating windows ---------- */

const Floating = styled.section`
  position: absolute;
  top: ${p => p.$top}px;
  left: ${p => p.$left}px;
  width: ${p => p.$width}px;
  border: 2px solid #101010;
  background: #242424;
  box-shadow: 0 4px 10px rgba(0, 0, 0, 0.55);
`

const TitleBar = styled.header`
  display: flex;
  align-items: center;
  gap: 4px;
  height: 12px;
  padding-left: 5px;
  white-space: nowrap;
  color: #868686;
  button {
    color: #ccc;
  }
`

const ToolPreview = styled.div`
  display: flex;
  justify-content: space-between;
  height: 27px;
  margin: 0 2px 2px;
  padding-left: 1px;
  background: ${colors.panel};
  button {
    align-self: flex-end;
  }
`

const Fields = styled.div`
  padding: 0 8px 0 14px;
`

const FontField = styled.div`
  display: flex;
  align-items: center;
  justify-content: space-between;
  height: 20px;
`

const SizeField = styled.label`
  display: flex;
  flex-direction: column;
  height: 20px;
  margin-left: -4px;
  padding: 1px 0 0 4px;
  border-bottom: 1px solid ${colors.line};
  input {
    width: 20px;
    height: 6px;
    margin: 0 0 0 14px;
    padding: 0;
    border: 1px solid #4a4a4a;
    background: #363636;
  }
`

const Field = styled.div`
  display: flex;
  align-items: center;
  height: 22px;
  margin-left: -4px;
  padding-left: 4px;
  border-bottom: ${p => (p.$last ? "0" : `1px solid ${colors.line}`)};
`

const Check = styled.label`
  display: flex;
  align-items: center;
  gap: 3px;
  height: 15px;
  input {
    appearance: none;
    display: grid;
    place-items: center;
    width: 11px;
    height: 11px;
    margin: 0;
    border: 1px solid #5a5a5a;
    background: #444;
  }
  input:checked::after {
    content: "✓";
    font-family: "DejaVu Sans", sans-serif;
    font-size: 9px;
    font-weight: 700;
    color: #eee;
  }
`

const WindowFoot = styled.div`
  height: 18px;
  margin: 11px 2px 0;
  background: #2e2e2e;
`

const fieldNames = ["スタイル", "行揃え", "文字方向", "テキストの向き", "追加方法", "変形方法"]

const ToolProperty = () => (
  <Floating $top={214} $left={459} $width={152}>
    <TitleBar>
      <Icon name="grip" size={7} />
      <button aria-label="閉じる">
        <Icon name="close" size={8} />
      </button>
      <button aria-label="最小化">
        <Icon name="minimize" size={7} />
      </button>
      ツールプロパティ[テキスト]
    </TitleBar>
    <ToolPreview>
      テキスト
      <IconButton $active $height={17} aria-label="ロック">
        <Icon name="lock" size={8} />
      </IconButton>
    </ToolPreview>
    <Fields>
      <FontField>
        フォント
        <Select label="フォント" value="ポプらむ☆キュート" $width={87} $bg="#383838" />
      </FontField>
      <SizeField>
        サイズ
        <input aria-label="サイズ" />
      </SizeField>
      {fieldNames.map((name, i) => (
        <Field key={name} $last={i === fieldNames.length - 1}>
          {name}
        </Field>
      ))}
      <Check>
        <input type="checkbox" defaultChecked />
        縦横比固定
      </Check>
    </Fields>
    <WindowFoot />
  </Floating>
)

const FontList = styled.ul`
  margin: 3px 2px 4px 1px;
  padding-right: 5px;
  border-left: 1px solid #bbb;
`

const FontItem = styled.li`
  button {
    display: block;
    width: 100%;
    height: 17px;
    padding-left: 2px;
    border-bottom: 1px solid ${p => (p.$selected ? "transparent" : "#8a8a8a")};
    white-space: nowrap;
    text-align: left;
    font-family: ${p => (p.$serif ? serif : sans)};
    font-size: 9px;
    font-weight: ${p => p.$weight || 400};
    line-height: 14px;
    color: #d0d0d0;
  }
  &:first-child button {
    height: 15px;
    font-size: 7px;
  }
  &:last-child button {
    border-bottom: 0;
  }
  ${p =>
    p.$selected &&
    css`
      margin: -3px -5px 0 -2px;
      border: 2px solid ${colors.red};
      background: #2f384c;
    `}
`

const AddFont = styled.button`
  display: flex;
  align-items: center;
  justify-content: center;
  gap: 5px;
  width: calc(100% - 4px);
  height: 18px;
  margin: 0 2px;
  border: 1px solid #505050;
  background: #434343;
`

const FilterRow = styled.div`
  display: flex;
  align-items: center;
  justify-content: space-between;
  padding: 1px 2px 0;
`

const Abc = styled.span`
  font-family: ${narrow};
  font-size: 7px;
  font-weight: 700;
`

const FontCount = styled.p`
  margin: 2px 2px 4px;
  text-align: right;
  font-family: ${narrow};
  font-size: 8px;
`

const fonts = [
  { name: "ニコカ", weight: 800 },
  { name: "ヒラギノ丸ゴ ProN W4", weight: 500 },
  { name: "ヒラギノ明朝 ProN W3", serif: true },
  { name: "ヒラギノ明朝 ProN W6", serif: true, weight: 700 },
  { name: "ヒラギノ角ゴシック W3" },
  { name: "ヒラギノ角ゴシック W6", weight: 700 },
  { name: "ヒラギノ角ゴシック W7", weight: 800 },
  { name: "ポプらむ☆キュート", selected: true },
  { name: "マメロン 3 Hi Regular", serif: true },
]

const FontPopup = () => (
  <Floating $top={276} $left={515} $width={137}>
    <FontList>
      {fonts.map(font => (
        <FontItem key={font.name} $serif={font.serif} $weight={font.weight} $selected={font.selected}>
          <button>{font.name}</button>
        </FontItem>
      ))}
    </FontList>
    <AddFont>
      <Icon name="plusCircle" size={12} />
      端末のフォントから追加
    </AddFont>
    <FilterRow>
      <IconButton $height={17} $width={16} aria-label="リスト">
        <Icon name="rows" size={11} />
      </IconButton>
      <IconButton $active $height={17} aria-label="書体">
        <Icon name="script" size={13} />
      </IconButton>
      <Abc>ABC</Abc>
      <Select label="絞り込み" value="すべてのフォ" $width={57} $padding="0 11px 0 0" $bg="#3c3c3c" />
      <IconButton $height={17} $width={16} aria-label="設定">
        <Icon name="gear" size={12} />
      </IconButton>
    </FilterRow>
    <FontCount>(312 / 312)</FontCount>
  </Floating>
)

const App = () => (
  <>
    <GlobalStyle />
    <Screen lang="ja">
      <Menu />
      <Workspace>
        <LayerColumn />
        <QuickColumn />
        <SizeColumn />
        <CanvasArea />
      </Workspace>
      <ToolProperty />
      <FontPopup />
    </Screen>
  </>
)

export default App
